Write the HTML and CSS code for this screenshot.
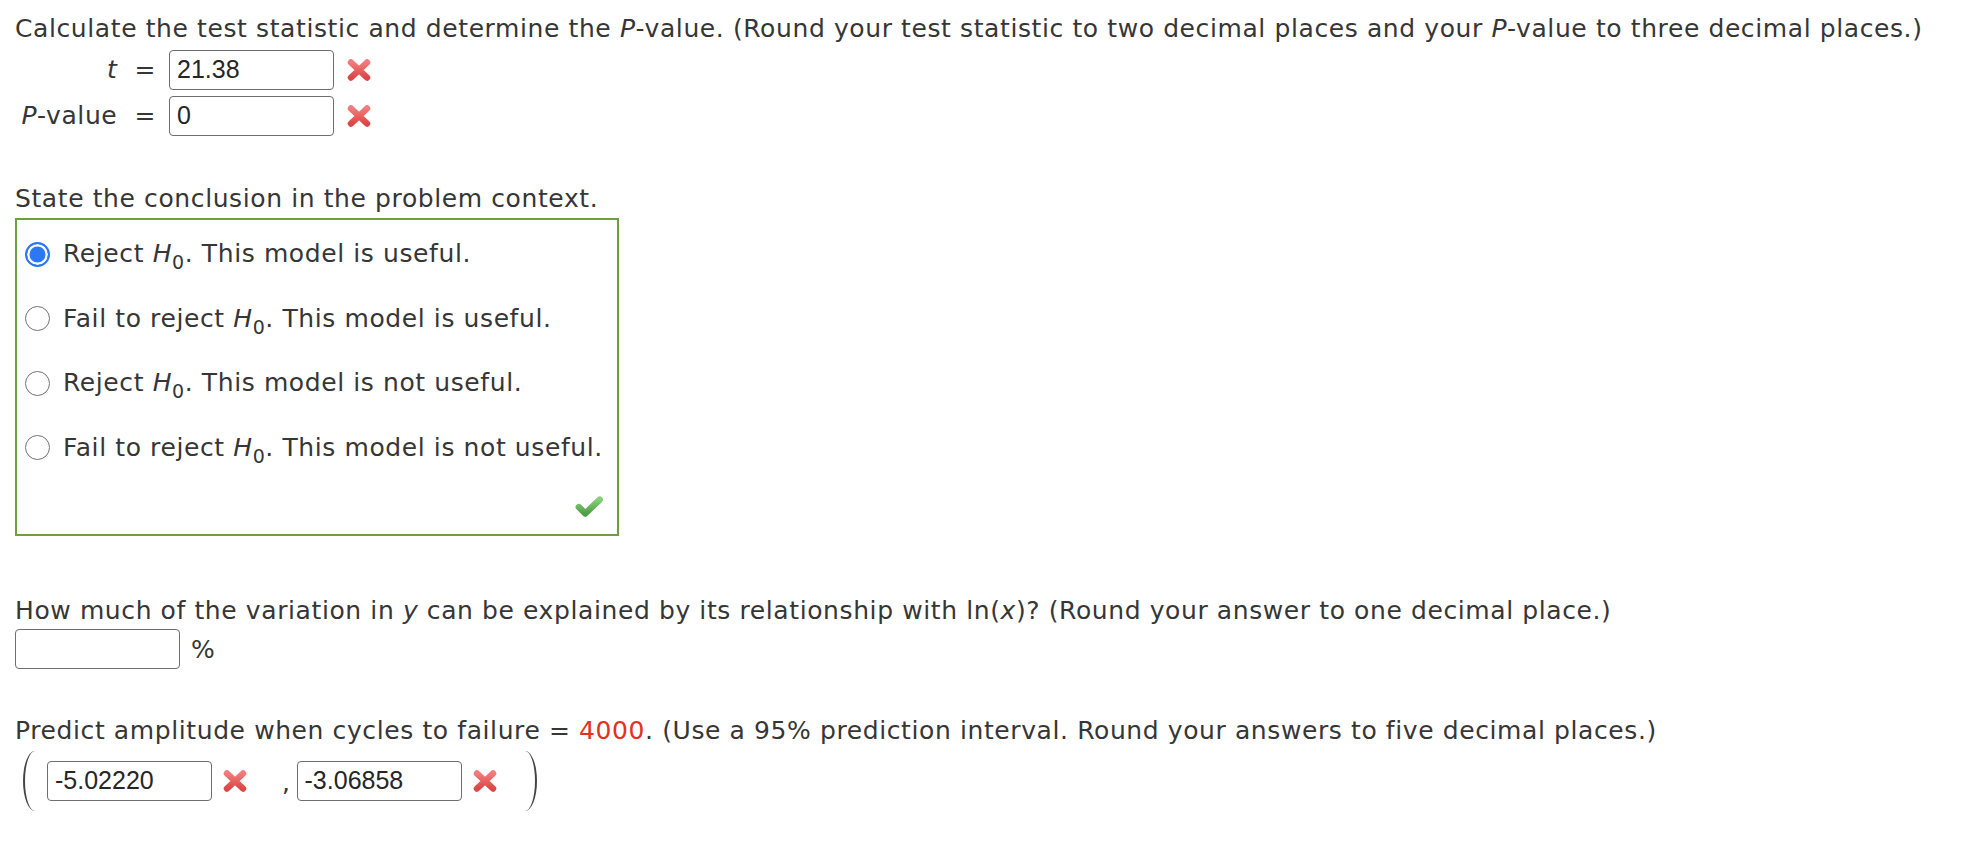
FILE: index.html
```html
<!DOCTYPE html>
<html>
<head>
<meta charset="utf-8">
<link rel="stylesheet" href="styles.css">
</head>
<body>
<svg width="0" height="0" class="defs">
  <defs>
    <linearGradient id="redg" x1="0" y1="0" x2="0" y2="1">
      <stop offset="0" stop-color="#f27b7b"/>
      <stop offset="1" stop-color="#dc4747"/>
    </linearGradient>
    <linearGradient id="greeng" x1="0" y1="0" x2="0" y2="1">
      <stop offset="0" stop-color="#86cf78"/>
      <stop offset="1" stop-color="#4f9f47"/>
    </linearGradient>
    <symbol id="xmark" viewBox="0 0 28 24">
      <path d="M6 4.5 L22 19.5 M22 4.5 L6 19.5" stroke="url(#redg)" stroke-width="6.5" stroke-linecap="round" fill="none"/>
    </symbol>
    <symbol id="check" viewBox="0 0 28 22">
      <path d="M4.5 12 L10.5 18 L24 5" stroke="url(#greeng)" stroke-width="6" stroke-linecap="round" stroke-linejoin="round" fill="none"/>
    </symbol>
  </defs>
</svg>

<p class="prompt first">Calculate the test statistic and determine the <i>P</i>-value. (Round your test statistic to two decimal places and your <i>P</i>-value to three decimal places.)</p>

<div class="answers">
  <div class="label"><i>t</i> &nbsp;=</div>
  <div class="field-row">
    <div class="input">21.38</div>
    <svg class="xicon"><use href="#xmark"/></svg>
  </div>
  <div class="label"><i>P</i>-value &nbsp;=</div>
  <div class="field-row">
    <div class="input">0</div>
    <svg class="xicon"><use href="#xmark"/></svg>
  </div>
</div>

<p class="prompt state">State the conclusion in the problem context.</p>

<div class="choices">
  <div class="option"><span class="radio on"></span><span class="otext">Reject <i>H</i><sub>0</sub>. This model is useful.</span></div>
  <div class="option"><span class="radio"></span><span class="otext">Fail to reject <i>H</i><sub>0</sub>. This model is useful.</span></div>
  <div class="option"><span class="radio"></span><span class="otext">Reject <i>H</i><sub>0</sub>. This model is not useful.</span></div>
  <div class="option"><span class="radio"></span><span class="otext">Fail to reject <i>H</i><sub>0</sub>. This model is not useful.</span></div>
  <div class="check-row"><svg class="checkicon"><use href="#check"/></svg></div>
</div>

<p class="prompt how">How much of the variation in <i>y</i> can be explained by its relationship with ln(<i>x</i>)? (Round your answer to one decimal place.)</p>
<div class="pct-row">
  <div class="input"></div>
  <span class="pct">%</span>
</div>

<p class="prompt predict">Predict amplitude when cycles to failure = <span class="red">4000</span>. (Use a 95% prediction interval. Round your answers to five decimal places.)</p>
<div class="interval">
  <span class="paren left"></span>
  <div class="input">-5.02220</div>
  <svg class="xicon x1"><use href="#xmark"/></svg>
  <span class="comma">,</span>
  <div class="input">-3.06858</div>
  <svg class="xicon x2"><use href="#xmark"/></svg>
  <span class="paren right"></span>
</div>
</body>
</html>
```

FILE: styles.css
```css
html, body {
  margin: 0;
  padding: 0;
  background: #fff;
}
body {
  padding-left: 15px;
  font-family: "DejaVu Sans", Verdana, sans-serif;
  font-size: 25px;
  letter-spacing: 0.6px;
  color: #363636;
}
.defs {
  position: absolute;
  width: 0;
  height: 0;
}
.prompt {
  margin: 0;
  line-height: 30px;
  white-space: nowrap;
}
.prompt.first { margin-top: 14px; }
.prompt.state { margin-top: 48px; }
.prompt.how { margin-top: 60px; }
.prompt.predict { margin-top: 47px; }
.red { color: #e5301f; }

.answers {
  display: grid;
  grid-template-columns: 141px auto;
  column-gap: 13px;
  row-gap: 6px;
  margin-top: 6px;
  align-items: center;
}
.label {
  text-align: right;
  line-height: 40px;
}
.field-row {
  display: flex;
  align-items: center;
}
.input {
  box-sizing: border-box;
  width: 165px;
  height: 40px;
  border: 1.5px solid #6e6e6e;
  border-radius: 4px;
  padding-left: 7px;
  font-family: "Liberation Sans", Arial, sans-serif;
  font-size: 25px;
  letter-spacing: 0;
  line-height: 37px;
  color: #262626;
  background: #fff;
}
.xicon {
  width: 28px;
  height: 24px;
  margin-left: 11px;
  flex: none;
}

.choices {
  box-sizing: border-box;
  width: 604px;
  height: 318px;
  margin-top: 4px;
  padding-top: 2px;
  border: 2px solid #6b9f3f;
}
.option {
  height: 64.5px;
  display: flex;
  align-items: center;
  padding-left: 8px;
  white-space: nowrap;
}
.radio {
  box-sizing: border-box;
  width: 25px;
  height: 25px;
  border-radius: 50%;
  border: 1.6px solid #727272;
  background: #fff;
  flex: none;
  margin-right: 13px;
}
.radio.on {
  border: 2.5px solid #2b78f4;
  background: #2b78f4;
  box-shadow: inset 0 0 0 2.5px #fff;
}
.otext { line-height: 30px; }
.otext sub {
  font-size: 19px;
  line-height: 0;
  vertical-align: -7px;
}
.check-row {
  display: flex;
  justify-content: flex-end;
  padding-top: 14px;
  padding-right: 13px;
}
.checkicon {
  width: 30px;
  height: 24px;
}

.pct-row {
  display: flex;
  align-items: center;
  margin-top: 3px;
}
.pct { margin-left: 11px; }

.interval {
  display: flex;
  align-items: center;
  height: 60px;
  margin-top: 5px;
  padding-left: 8px;
}
.paren {
  box-sizing: border-box;
  width: 12px;
  height: 60px;
  flex: none;
}
.paren.left {
  border-left: 2.5px solid #444;
  border-radius: 100% 0 0 100% / 50% 0 0 50%;
  margin-right: 12px;
}
.paren.right {
  border-right: 2.5px solid #444;
  border-radius: 0 100% 100% 0 / 0 50% 50% 0;
  margin-left: 26px;
}
.x1 { margin-left: 9px; }
.x2 { margin-left: 9px; }
.comma {
  margin-left: 33px;
  margin-right: 6px;
  line-height: 40px;
  position: relative;
  top: 2px;
}
```
